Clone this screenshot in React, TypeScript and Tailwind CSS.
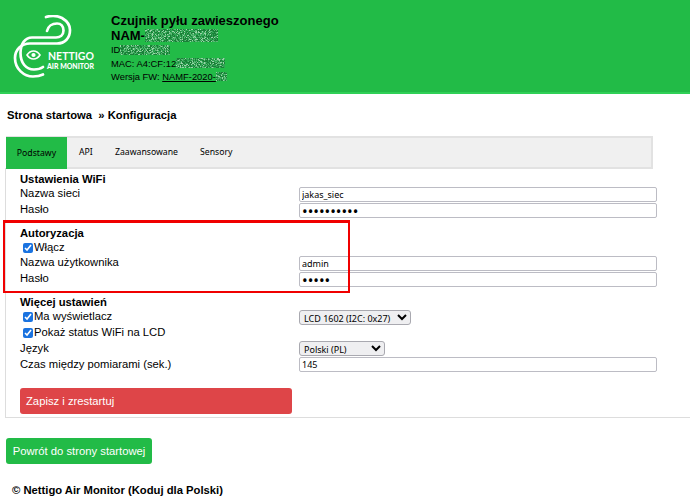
import React from "react";

function Noise({ w, h, seed, className }: { w: number; h: number; seed: number; className?: string }) {
  const cells: React.ReactNode[] = [];
  let s = seed * 9301 + 49297;
  const next = () => {
    s = (s * 9301 + 49297) % 233280;
    return s / 233280;
  };
  for (let y = 0; y < h; y++) {
    for (let x = 0; x < w; x++) {
      const r = next();
      const fill = r < 0.34 ? "#1a8038" : r < 0.55 ? "#5cb876" : r < 0.68 ? "#9ad4a8" : "#2fa553";
      cells.push(<rect key={`${x}-${y}`} x={x} y={y} width={1} height={1} fill={fill} />);
    }
  }
  return (
    <svg width={w} height={h} className={className} shapeRendering="crispEdges">
      {cells}
    </svg>
  );
}

function Logo() {
  return (
    <svg width="88" height="64" viewBox="0 0 88 64" className="shrink-0">
      <g fill="none" stroke="#fff" strokeWidth="2.7" strokeLinecap="round">
        <path d="M33 2 C38 0.5 44 0.5 49 3 C54 6 57 10 57 15 C57 23 52 28.5 44 28.5 L17 28.5 C8 28.5 2 35 2 43 C2 54 11 61.5 20 61.5 C24 61.5 27 61 30 59.5" />
        <path d="M34 16 C35 11.5 39 8.5 44 8.5 C48 8.5 50.5 11.5 50.5 15.5 C50.5 20 47 22.5 43 22.5 L19 22.5 C12 22.5 7.5 29 7.5 38 C7.5 48 13 54.5 21 54.5 C25 54.5 28 53.5 30 52" />
        <path d="M14 40 C16 37 18 36 20.5 36 C23 36 25 37 27 40 C25 43 23 44 20.5 44 C18 44 16 43 14 40 Z" strokeWidth="1.6" />
      </g>
      <circle cx="20.5" cy="40" r="2.1" fill="#fff" />
      <text x="35" y="45" fill="#fff" fontSize="12" fontWeight="700" fontFamily="Lato, sans-serif" textLength="46" lengthAdjust="spacingAndGlyphs">NETTIGO</text>
      <text x="34" y="54" fill="#fff" fontSize="7" fontWeight="900" fontFamily="Lato, sans-serif" textLength="47" lengthAdjust="spacingAndGlyphs">AIR MONITOR</text>
    </svg>
  );
}

const inputCls =
  "block w-[358px] h-[15px] border border-[#bcbcc4] rounded-[2px] bg-white px-[2px] text-[9px] text-black outline-none [font-family:'Noto_Sans',sans-serif] leading-none";

const passCls =
  "block w-[358px] h-[15px] border border-[#bcbcc4] rounded-[2px] bg-white px-[2px] text-[15px] text-black outline-none [font-family:'Noto_Sans',sans-serif] leading-none";

function Row({ label, children }: { label: React.ReactNode; children?: React.ReactNode }) {
  return (
    <div className="flex h-[16px]">
      <div className="w-[279px] leading-[13px]">{label}</div>
      <div>{children}</div>
    </div>
  );
}

function Check({ label, className = "" }: { label: string; className?: string }) {
  return (
    <label className={`flex items-center h-[13px] pl-[3px] gap-[1px] ${className}`}>
      <input type="checkbox" defaultChecked className="m-0 w-[10px] h-[10px] accent-[#1a73e0]" />
      <span>{label}</span>
    </label>
  );
}

const selectCls =
  "block h-[15px] border border-[#a9a9b0] rounded-[3px] bg-[#efeff1] p-0 text-[9px] leading-none text-black [font-family:'Noto_Sans',sans-serif]";

export default function App() {
  return (
    <div className="relative w-[690px] h-[499px] overflow-hidden bg-white text-black text-[11.25px] [font-family:'Liberation_Sans',Arial,sans-serif]">
      <header className="flex h-[94px] items-start bg-[#22bb47] border-b-2 border-[#2fd056] pl-[13px] pt-[15px]">
        <Logo />
        <div className="ml-[10px] -mt-[2px]">
          <div className="text-[13px] font-bold leading-[15px]">Czujnik pyłu zawieszonego</div>
          <div className="flex items-center text-[13px] font-bold leading-[15px]">
            NAM-
            <Noise w={73} h={13} seed={3} />
          </div>
          <div className="flex items-center text-[9.4px] leading-[13.5px]">
            ID
            <Noise w={50} h={10} seed={7} />
          </div>
          <div className="flex items-center text-[9.4px] leading-[13.5px]">
            MAC: A4:CF:12
            <Noise w={49} h={10} seed={11} />
          </div>
          <div className="flex items-center text-[9.4px] leading-[13.5px]">
            Wersja FW:&nbsp;
            <span className="flex items-center underline">
              NAMF-2020-
              <Noise w={11} h={9} seed={13} />
            </span>
          </div>
        </div>
      </header>

      <div className="pl-[7px] mt-[14px] font-bold leading-[14px]">Strona startowa &nbsp;» Konfiguracja</div>

      <nav className="ml-[6px] mt-[14px] flex w-[647px] h-[33px] bg-[#f0f0f0] border-2 border-[#e2e2e2] border-l-0 text-[8.7px] [font-family:'Noto_Sans',sans-serif]">
        <div className="w-[61px] -mt-[1px] h-[32px] flex items-center justify-center pt-[2px] bg-[#22bb47]">Podstawy</div>
        <div className="flex items-center pt-[1px] pl-[12px] w-[48px]">API</div>
        <div className="flex items-center pt-[1px] w-[85px]">Zaawansowane</div>
        <div className="flex items-center pt-[1px]">Sensory</div>
      </nav>

      <main className="ml-[5px] h-[250px] border-l border-b border-[#dddddd] pl-[14px] pt-[3px] -mt-[1px]">
        <Row label={<b className="block mt-[2px]">Ustawienia WiFi</b>} />
        <Row label="Nazwa sieci">
          <input className={inputCls} defaultValue="jakas_siec" readOnly />
        </Row>
        <Row label="Hasło">
          <input className={passCls} type="password" defaultValue="1234567890" readOnly />
        </Row>

        <div className="mt-[5px]">
          <Row label={<b className="block mt-[3px]">Autoryzacja</b>} />
          <Row label={<Check label="Włącz" className="mt-[1px]" />} />
          <Row label="Nazwa użytkownika">
            <input className={inputCls} defaultValue="admin" readOnly />
          </Row>
          <Row label="Hasło">
            <input className={passCls} type="password" defaultValue="12345" readOnly />
          </Row>
        </div>

        <div className="mt-[6px]">
          <Row label={<b className="block mt-[2px]">Więcej ustawień</b>} />
          <Row label={<Check label="Ma wyświetlacz" />}>
            <select className={`${selectCls} w-[112px]`} defaultValue="a">
              <option value="a">LCD 1602 (I2C: 0x27)</option>
            </select>
          </Row>
          <Row label={<Check label="Pokaż status WiFi na LCD" />} />
          <Row label="Język">
            <select className={`${selectCls} w-[86px] -mt-[1px]`} defaultValue="a">
              <option value="a">Polski (PL)</option>
            </select>
          </Row>
          <Row label="Czas między pomiarami (sek.)">
            <input className={`${inputCls} -mt-[1px]`} defaultValue="145" readOnly />
          </Row>
        </div>

        <button className="block mt-[14px] w-[272px] h-[26px] rounded-[3px] bg-[#de4548] text-white text-left pl-[6px] text-[11.25px]">
          Zapisz i zrestartuj
        </button>
      </main>

      <button className="block ml-[6px] mt-[20px] w-[146px] h-[26px] rounded-[3px] bg-[#22bb47] text-white text-[11.25px]">
        Powrót do strony startowej
      </button>

      <footer className="mt-[19px] pl-[12px] font-bold leading-[14px]">© Nettigo Air Monitor (Koduj dla Polski)</footer>

      <div className="absolute left-[3px] top-[220px] w-[347px] h-[73px] border-2 border-t-[3px] border-[#f00000] pointer-events-none" />
    </div>
  );
}
